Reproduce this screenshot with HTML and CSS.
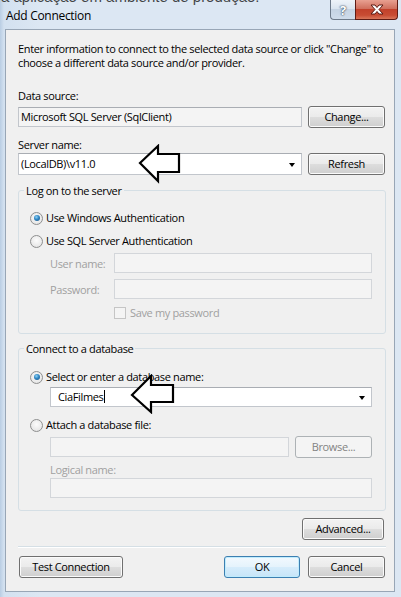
FILE: index.html
```html
<!DOCTYPE html>
<html>
<head>
<meta charset="utf-8">
<link rel="stylesheet" href="styles.css">
</head>
<body>
<div class="window">
  <div class="behind">a aplicação em ambiente de produção.</div>
  <div class="titlebar">
    <span class="title">Add Connection</span>
    <div class="caption">
      <span class="cap-btn help">?</span>
      <span class="cap-btn close">
        <svg width="14" height="11" viewBox="0 0 14 11"><path d="M1 1 L5 1 L7 3.5 L9 1 L13 1 L9 5.5 L13 10 L9 10 L7 7.5 L5 10 L1 10 L5 5.5 Z" fill="#fff" stroke="#5a1a12" stroke-width="1"/></svg>
      </span>
    </div>
  </div>
  <div class="client">
    <p class="intro">Enter information to connect to the selected data source or click "Change" to<br>choose a different data source and/or provider.</p>
    <div class="label lbl-ds">Data source:</div>
    <div class="row row-ds">
      <div class="textbox readonly">Microsoft SQL Server (SqlClient)</div>
      <button class="btn side">Change...</button>
    </div>
    <div class="label lbl-sn">Server name:</div>
    <div class="row row-sn">
      <div class="combo">(LocalDB)\v11.0<span class="caret"></span></div>
      <button class="btn side">Refresh</button>
    </div>

    <fieldset class="group group-logon">
      <legend>Log on to the server</legend>
      <div class="radio-row r1"><span class="radio checked"></span>Use Windows Authentication</div>
      <div class="radio-row r2"><span class="radio"></span>Use SQL Server Authentication</div>
      <div class="field-row f-user"><span class="flabel">User name:</span><div class="textbox disabled grow"></div></div>
      <div class="field-row f-pass"><span class="flabel">Password:</span><div class="textbox disabled grow"></div></div>
      <div class="check-row"><span class="checkbox"></span>Save my password</div>
    </fieldset>

    <fieldset class="group group-db">
      <legend>Connect to a database</legend>
      <div class="radio-row r3"><span class="radio checked"></span>Select or enter a database name:</div>
      <div class="combo db-combo">CiaFilmes<span class="cursor"></span><span class="caret"></span></div>
      <div class="radio-row r4"><span class="radio"></span>Attach a database file:</div>
      <div class="file-row">
        <div class="textbox disabled grow"></div>
        <button class="btn disabled-btn browse">Browse...</button>
      </div>
      <div class="label dis lbl-logical">Logical name:</div>
      <div class="textbox disabled logical"></div>
    </fieldset>

    <div class="adv-row"><button class="btn advanced">Advanced...</button></div>
    <div class="separator"></div>
    <div class="footer">
      <button class="btn test">Test Connection</button>
      <div class="footer-right">
        <button class="btn default ok">OK</button>
        <button class="btn cancel">Cancel</button>
      </div>
    </div>
  </div>

  <svg class="arrow arrow-server" width="44" height="40" viewBox="0 0 44 40">
    <path d="M2 19 L20 2 L20 10 L41 10 L41 28 L20 28 L20 37 Z" fill="#fff" stroke="#000" stroke-width="2.2" stroke-linejoin="miter"/>
  </svg>
  <svg class="arrow arrow-db" width="46" height="40" viewBox="0 0 46 40">
    <path d="M2 21 L21 2 L21 11 L43 11 L43 28 L21 28 L21 38 Z" fill="#fff" stroke="#000" stroke-width="2.2" stroke-linejoin="miter"/>
  </svg>
</div>
</body>
</html>
```

FILE: styles.css
```css
* { box-sizing: border-box; }
html, body {
  margin: 0;
  padding: 0;
  width: 401px;
  height: 597px;
  overflow: hidden;
  background: #d7e4f2;
}
body {
  font-family: "Open Sans", "Noto Sans", sans-serif;
  font-size: 11px;
  letter-spacing: -0.35px;
  color: #000;
}
.window {
  position: relative;
  width: 401px;
  height: 597px;
  background: linear-gradient(90deg, #b9cde3 0px, #d3e1f0 4px, #dce7f3 40px, #dce7f3 100%);
  display: flex;
  flex-direction: column;
  overflow: hidden;
}
.behind {
  position: absolute;
  left: 1px;
  top: -12px;
  font-family: "Liberation Sans", sans-serif;
  font-size: 15px;
  letter-spacing: 0;
  color: #1a1a1a;
  opacity: 0.8;
  white-space: nowrap;
}
.titlebar {
  height: 29px;
  flex: none;
  display: flex;
  align-items: flex-start;
  justify-content: space-between;
  position: relative;
}
.title {
  margin: 8px 0 0 6px;
  font-size: 12px;
  letter-spacing: -0.3px;
  line-height: 16px;
}
.caption {
  display: flex;
  margin-right: 3px;
  height: 20px;
}
.cap-btn {
  height: 20px;
  display: flex;
  align-items: center;
  justify-content: center;
  border: 1px solid #6d7a8a;
  border-top: none;
}
.help {
  width: 25px;
  border-radius: 0 0 0 4px;
  border-right: none;
  background: linear-gradient(#eef3f9 0%, #dbe5f0 45%, #c5d3e3 50%, #cfdceb 100%);
  color: #fff;
  font-weight: bold;
  font-size: 13px;
  text-shadow: 0 0 2px #2c3f57, 0 0 1px #2c3f57;
}
.close {
  width: 43px;
  border-radius: 0 0 4px 0;
  border-color: #5e1b14;
  background: linear-gradient(#e8a091 0%, #d0705e 45%, #c2412b 50%, #c84c33 80%, #d9765a 100%);
}
.client {
  margin: 0 6px 0 5px;
  height: 563px;
  flex: none;
  border: 1px solid #98a6b6;
  background: #f0f0f0;
  padding: 0 8px 0 12px;
  display: flex;
  flex-direction: column;
}
.intro {
  margin: 12px 0 0 0;
  line-height: 13.5px;
  white-space: nowrap;
}
.label {
  line-height: 13px;
  height: 13px;
  white-space: nowrap;
}
.lbl-ds { margin-top: 20px; }
.lbl-sn { margin-top: 10px; }
.row {
  display: flex;
  align-items: center;
  gap: 6px;
  height: 22px;
}
.row-ds { margin-top: 4px; }
.row-sn { margin-top: 2px; }
.textbox, .combo {
  height: 20px;
  border: 1px solid #c2c6cc;
  border-top-color: #a9adb3;
  background: #fff;
  line-height: 18px;
  padding-left: 2px;
  white-space: nowrap;
  overflow: hidden;
}
.row .textbox, .row .combo { width: 284px; flex: none; }
.readonly { background: #f4f4f4; }
.row-sn .combo { height: 22px; line-height: 20px; }
.combo { position: relative; }
.caret {
  position: absolute;
  right: 6px;
  top: 50%;
  margin-top: -1px;
  width: 0;
  height: 0;
  border-left: 3.5px solid transparent;
  border-right: 3.5px solid transparent;
  border-top: 4px solid #000;
}
.disabled { background: #f4f4f4; border-color: #d3d6da; }
.btn {
  font-family: inherit;
  font-size: 11px;
  letter-spacing: -0.35px;
  color: #000;
  height: 22px;
  padding: 0;
  border: 1px solid #707070;
  border-radius: 3px;
  background: linear-gradient(#f3f3f3 0%, #ebebeb 48%, #dddddd 52%, #cfcfcf 100%);
  box-shadow: inset 0 0 0 1px #fbfbfb;
  line-height: 18px;
}
.side { width: 77px; flex: none; }
.default {
  border-color: #3c7fb1;
  background: linear-gradient(#f2f9fe 0%, #e5f3fc 48%, #d5ecfb 52%, #c7e5f8 100%);
  box-shadow: inset 0 0 0 1px #c0ecfd;
}
.disabled-btn {
  border-color: #adb2b5;
  background: #f4f4f4;
  color: #838383;
  box-shadow: none;
}
.group {
  margin: 0;
  border: 1px solid #d5dfe5;
  border-radius: 3px;
  padding: 0 13px 0 11px;
  display: flex;
  flex-direction: column;
}
.group legend {
  margin-left: -6px;
  padding: 0 2px;
  line-height: 13px;
  height: 13px;
}
.group-logon { margin-top: 9px; padding-bottom: 14px; }
.group-db { margin-top: 8px; padding-bottom: 12px; }
.radio-row {
  display: flex;
  align-items: center;
  height: 16px;
  line-height: 16px;
  white-space: nowrap;
}
.r1 { margin-top: 13px; }
.r2 { margin-top: 7px; }
.r3 { margin-top: 14px; }
.r4 { margin-top: 10px; }
.radio {
  width: 13px;
  height: 13px;
  border-radius: 50%;
  border: 1px solid #8e8f8f;
  background: radial-gradient(circle at 50% 40%, #fcfcfc 0%, #e8e8e8 70%, #d4d4d4 100%);
  margin-right: 3px;
  flex: none;
  position: relative;
}
.radio.checked::after {
  content: "";
  position: absolute;
  left: 2.5px;
  top: 2.5px;
  width: 6px;
  height: 6px;
  border-radius: 50%;
  background: radial-gradient(circle at 40% 35%, #8fd3f5 0%, #2f86c4 45%, #1b4f7d 100%);
}
.field-row {
  display: flex;
  align-items: center;
  margin-left: 20px;
  height: 20px;
}
.f-user { margin-top: 4px; }
.f-pass { margin-top: 6px; }
.flabel { width: 64px; flex: none; color: #a0a0a0; white-space: nowrap; }
.grow { flex: 1; }
.check-row {
  display: flex;
  align-items: center;
  margin: 7px 0 0 84px;
  height: 13px;
  color: #a0a0a0;
}
.checkbox {
  width: 12px;
  height: 12px;
  border: 1px solid #c5c5c5;
  background: #f4f4f4;
  margin-right: 4px;
}
.db-combo {
  margin: 2px 0 0 20px;
  height: 20px;
  padding-left: 7px;
}
.cursor {
  display: inline-block;
  width: 1px;
  height: 13px;
  background: #000;
  vertical-align: -2px;
}
.file-row {
  display: flex;
  align-items: center;
  gap: 6px;
  margin: 3px 0 0 20px;
  height: 22px;
}
.browse { width: 77px; flex: none; }
.dis { color: #a0a0a0; }
.lbl-logical { margin: 5px 0 0 20px; }
.logical { margin: 2px 0 0 20px; }
.adv-row {
  display: flex;
  justify-content: flex-end;
  margin-top: 7px;
  padding-right: 2px;
}
.advanced { width: 82px; }
.separator {
  margin-top: 6px;
  background: #d5dfe5;
  border-bottom: 1px solid #fff;
  height: 2px;
}
.footer {
  display: flex;
  justify-content: space-between;
  margin-top: 8px;
  padding-left: 1px;
  padding-right: 1px;
}
.test { width: 104px; }
.footer-right { display: flex; gap: 8px; }
.ok { width: 76px; }
.cancel { width: 77px; }
.arrow { position: absolute; }
.arrow-server { left: 138px; top: 144px; }
.arrow-db { left: 130px; top: 374px; }
```
